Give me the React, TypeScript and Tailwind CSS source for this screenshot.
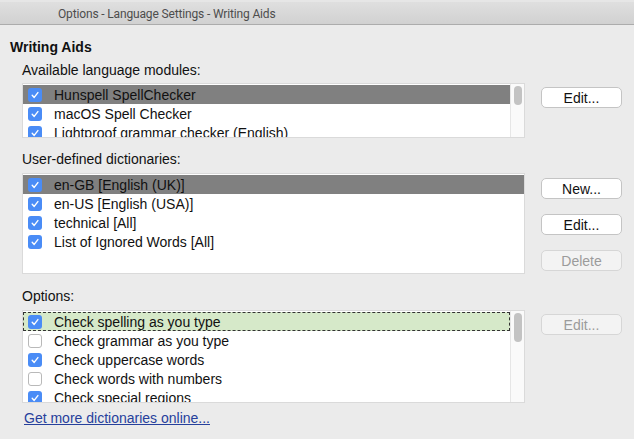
import React from "react";

type Row = { label: string; checked: boolean };

const Check = ({ checked }: { checked: boolean }) =>
  checked ? (
    <span className="w-[14px] h-[14px] shrink-0 rounded-[3px] bg-[#4a8cf6] flex items-center justify-center">
      <svg width="10" height="10" viewBox="0 0 10 10">
        <path d="M2.2 5.3 L4.2 7.4 L7.9 2.6" stroke="white" strokeWidth="1.4" fill="none" strokeLinecap="round" strokeLinejoin="round" />
      </svg>
    </span>
  ) : (
    <span className="w-[14px] h-[14px] shrink-0 rounded-[3px] bg-white border border-[#b9b9b9]" />
  );

const ListBox = ({
  rows,
  height,
  selected,
  focused,
  thumbH,
}: {
  rows: Row[];
  height: string;
  selected?: number;
  focused?: number;
  thumbH?: number;
}) => (
  <div className={`w-[503px] ${height} bg-white border border-[#dadada] flex overflow-hidden`}>
    <div className="flex-1 pt-[1px] overflow-hidden">
      {rows.map((r, i) => (
        <div
          key={i}
          className={`h-[19px] flex items-center pl-[5px] gap-[12px] text-[14px] leading-none ${
            i === selected ? "bg-[#808080]" : ""
          } ${i === focused ? "bg-[#d6e9c9] outline-1 outline-dashed outline-[#333333] -outline-offset-1" : ""}`}
        >
          <Check checked={r.checked} />
          <span className="text-[#111111] whitespace-nowrap">{r.label}</span>
        </div>
      ))}
    </div>
    {thumbH !== undefined && (
      <div className="w-[14px] bg-[#fafafa] border-l border-[#e6e6e6] pt-[2px] flex justify-center">
        <div className="w-[8px] rounded-full bg-[#c3c3c3]" style={{ height: thumbH }} />
      </div>
    )}
  </div>
);

const Btn = ({ children, disabled }: { children: React.ReactNode; disabled?: boolean }) => (
  <button
    className={`w-[81px] h-[21px] rounded-[5px] border text-[14px] leading-none flex items-center justify-center ${
      disabled ? "bg-[#f3f3f3] border-[#d6d6d6] text-[#9b9b9b]" : "bg-white border-[#c4c4c4] text-[#111111]"
    }`}
  >
    {children}
  </button>
);

export default function App() {
  return (
    <div
      className="w-[634px] h-[439px] bg-[#ebebeb] overflow-hidden flex flex-col"
      style={{ fontFamily: '"Liberation Sans", Arial, sans-serif' }}
    >
      <div className="h-[25px] shrink-0 border-t-2 border-t-[#e6e6e6] bg-gradient-to-b from-[#dfdfdf] to-[#d1d1d1] border-b border-b-[#acacac] flex items-center pl-[58px] pt-[2px]">
        <span
          className="text-[12px] tracking-[-0.15px] text-[#4d4d4d]"
          style={{ fontFamily: 'Roboto, "Liberation Sans", sans-serif' }}
        >
          Options - Language Settings - Writing Aids
        </span>
      </div>

      <div className="pl-[10px] mt-[14px] text-[14px] leading-[16px] font-bold text-[#111111]">Writing Aids</div>

      <div className="pl-[22px] mt-[7px] text-[14px] leading-[16px] text-[#111111]">Available language modules:</div>
      <div className="pl-[22px] mt-[5px] flex">
        <ListBox
          height="h-[55px]"
          selected={0}
          thumbH={19}
          rows={[
            { label: "Hunspell SpellChecker", checked: true },
            { label: "macOS Spell Checker", checked: true },
            { label: "Lightproof grammar checker (English)", checked: true },
          ]}
        />
        <div className="ml-[16px] pt-[4px] flex flex-col">
          <Btn>Edit...</Btn>
        </div>
      </div>

      <div className="pl-[22px] mt-[13px] text-[14px] leading-[16px] text-[#111111]">User-defined dictionaries:</div>
      <div className="pl-[22px] mt-[6px] flex">
        <ListBox
          height="h-[101px]"
          selected={0}
          rows={[
            { label: "en-GB [English (UK)]", checked: true },
            { label: "en-US [English (USA)]", checked: true },
            { label: "technical [All]", checked: true },
            { label: "List of Ignored Words [All]", checked: true },
          ]}
        />
        <div className="ml-[16px] pt-[5px] flex flex-col gap-[15px]">
          <Btn>New...</Btn>
          <Btn>Edit...</Btn>
          <Btn disabled>Delete</Btn>
        </div>
      </div>

      <div className="pl-[22px] mt-[14px] text-[14px] leading-[16px] text-[#111111]">Options:</div>
      <div className="pl-[22px] mt-[6px] flex">
        <ListBox
          height="h-[93px]"
          focused={0}
          thumbH={29}
          rows={[
            { label: "Check spelling as you type", checked: true },
            { label: "Check grammar as you type", checked: false },
            { label: "Check uppercase words", checked: true },
            { label: "Check words with numbers", checked: false },
            { label: "Check special regions", checked: true },
          ]}
        />
        <div className="ml-[16px] pt-[4px] flex flex-col">
          <Btn disabled>Edit...</Btn>
        </div>
      </div>

      <div className="pl-[24px] mt-[7px] text-[14px] leading-[16px]">
        <a className="text-[#26409c] underline">Get more dictionaries online...</a>
      </div>
    </div>
  );
}
